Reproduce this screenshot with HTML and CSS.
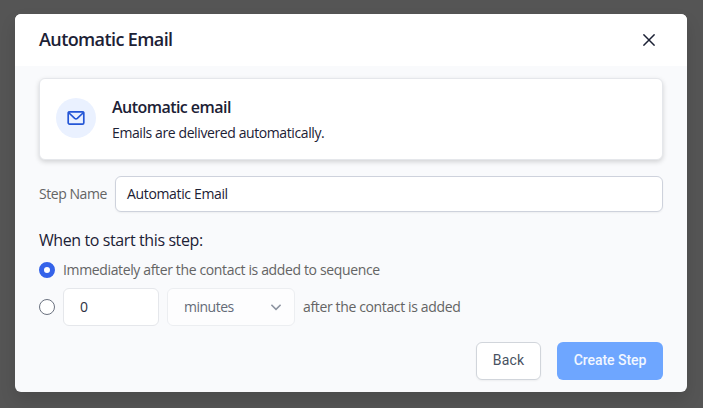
FILE: index.html
```html
<!DOCTYPE html>
<html lang="en">
<head>
<meta charset="utf-8">
<title>Automatic Email</title>
<link rel="stylesheet" href="styles.css">
</head>
<body>
<main class="modal" role="dialog">
  <header class="modal-header">
    <h1 class="title"><span>Automatic Email</span></h1>
    <button class="close" aria-label="Close">
      <svg width="12" height="12" viewBox="0 0 12 12" fill="none" stroke="currentColor" stroke-width="1.5"><path d="M0.4 0.4 11.6 11.6M11.6 0.4 0.4 11.6"/></svg>
    </button>
  </header>
  <div class="modal-body">
    <section class="card">
      <div class="badge">
        <svg width="18" height="14" viewBox="0 0 18 14" fill="none" stroke="currentColor" stroke-width="1.7" stroke-linejoin="round" stroke-linecap="round"><rect x="1.2" y="0.9" width="15.6" height="12.2" rx="1.4"/><path d="M1.5 1.5 7.7 7.3Q9 8.4 10.3 7.3L16.5 1.5"/></svg>
      </div>
      <div class="card-text">
        <h2 class="card-title"><span>Automatic email</span></h2>
        <p class="card-desc"><span>Emails are delivered automatically.</span></p>
      </div>
    </section>
    <div class="name-row">
      <label class="name-label">Step Name</label>
      <div class="field name-field"><span>Automatic Email</span></div>
    </div>
    <h3 class="when"><span>When to start this step:</span></h3>
    <div class="option first">
      <span class="radio checked"></span>
      <span class="option-text immediate">Immediately after the contact is added to sequence</span>
    </div>
    <div class="option second">
      <span class="radio"></span>
      <div class="field number">0</div>
      <div class="field select"><span class="unit">minutes</span>
        <svg width="10" height="7" viewBox="0 0 10 7" fill="none" stroke="currentColor" stroke-width="1.5"><path d="M0.4 0.8 5 5.4 9.6 0.8"/></svg>
      </div>
      <span class="option-text delayed">after the contact is added</span>
    </div>
    <footer class="actions">
      <button class="btn back">Back</button>
      <button class="btn create">Create Step</button>
    </footer>
  </div>
</main>
</body>
</html>
```
FILE: styles.css
```css
* { box-sizing: border-box; }
body {
  margin: 0;
  height: 408px;
  padding: 14px 16px 16px 15px;
  overflow: hidden;
  background: #555;
  font: 14px/20px "Open Sans", sans-serif;
  color: #1c2135;
}
h1, h2, h3, p { margin: 0; font-weight: 400; }
button { font: inherit; padding: 0; border: 0; background: none; }
svg { display: block; }
.modal {
  height: 378px;
  border-radius: 6px;
  overflow: hidden;
  background: #f9fafc;
  box-shadow: 0 8px 16px rgba(0, 0, 0, .12);
}
.modal-header {
  display: flex;
  justify-content: space-between;
  align-items: center;
  height: 52px;
  padding: 0 32px 0 24px;
  background: #fff;
}
.title { font-size: 18px; font-weight: 600; line-height: 26px; letter-spacing: -.6px; padding-bottom: 3px; }
.close { color: #1c2135; }
.modal-body { padding: 12px 24px; }
.card {
  display: flex;
  align-items: center;
  height: 82px;
  padding: 0 16px;
  gap: 16px;
  background: #fff;
  border: 1px solid #e5e7eb;
  border-radius: 6px;
  box-shadow: 0 2px 5px rgba(0, 0, 0, .16);
}
.badge {
  display: grid;
  place-items: center;
  width: 40px;
  height: 40px;
  margin-bottom: 2px;
  border-radius: 50%;
  background: #eaf1ff;
  color: #2456d6;
}
.card-title { font-size: 16px; font-weight: 600; line-height: 24px; letter-spacing: -.54px; }
.card-desc { margin-top: 4px; line-height: 20px; letter-spacing: -.4px; }
.name-row { display: flex; align-items: center; gap: 8px; margin-top: 16px; }
.name-label { width: 68px; white-space: nowrap; color: #646464; letter-spacing: -.45px; }
.field {
  display: flex;
  align-items: center;
  background: #fff;
  border: 1px solid #e5e7eb;
  border-radius: 6px;
}
.name-field { flex: 1; height: 36px; padding: 0 11px; border-color: #ced2dc; letter-spacing: -.35px; box-shadow: 0 1px 2px rgba(0, 0, 0, .05); }
.when { margin-top: 16px; font-size: 16px; line-height: 24px; letter-spacing: -.4px; }
.option { display: flex; align-items: center; gap: 8px; }
.first { margin-top: 8px; height: 20px; }
.second { margin-top: 8px; height: 38px; }
.radio { flex: none; width: 16px; height: 16px; border: 1px solid #6b7280; border-radius: 50%; background: #fff; }
.checked { border: 5px solid #3563e9; }
.option-text { color: #646464; white-space: nowrap; letter-spacing: -.36px; }
.number { width: 96px; height: 38px; padding: 0 16px; color: #2d3142; }
.select { width: 128px; height: 38px; padding: 0 13px 0 16px; justify-content: space-between; background: #fdfdfe; border-color: #eceef1; color: #646b78; letter-spacing: -.5px; }
.select svg { color: #8d94a1; }
.actions { display: flex; justify-content: flex-end; gap: 16px; margin-top: 16px; }
.btn { height: 38px; padding-bottom: 2px; border-radius: 6px; font: 500 14px/20px Roboto, sans-serif; }
.back { width: 65px; background: #fff; border: 1px solid #d1d5db; color: #485161; font-weight: 400; letter-spacing: .15px; box-shadow: 0 1px 2px rgba(0, 0, 0, .05); }
.create { width: 106px; background: #6ea6ff; color: #f2f7ff; letter-spacing: -.05px; }
```
